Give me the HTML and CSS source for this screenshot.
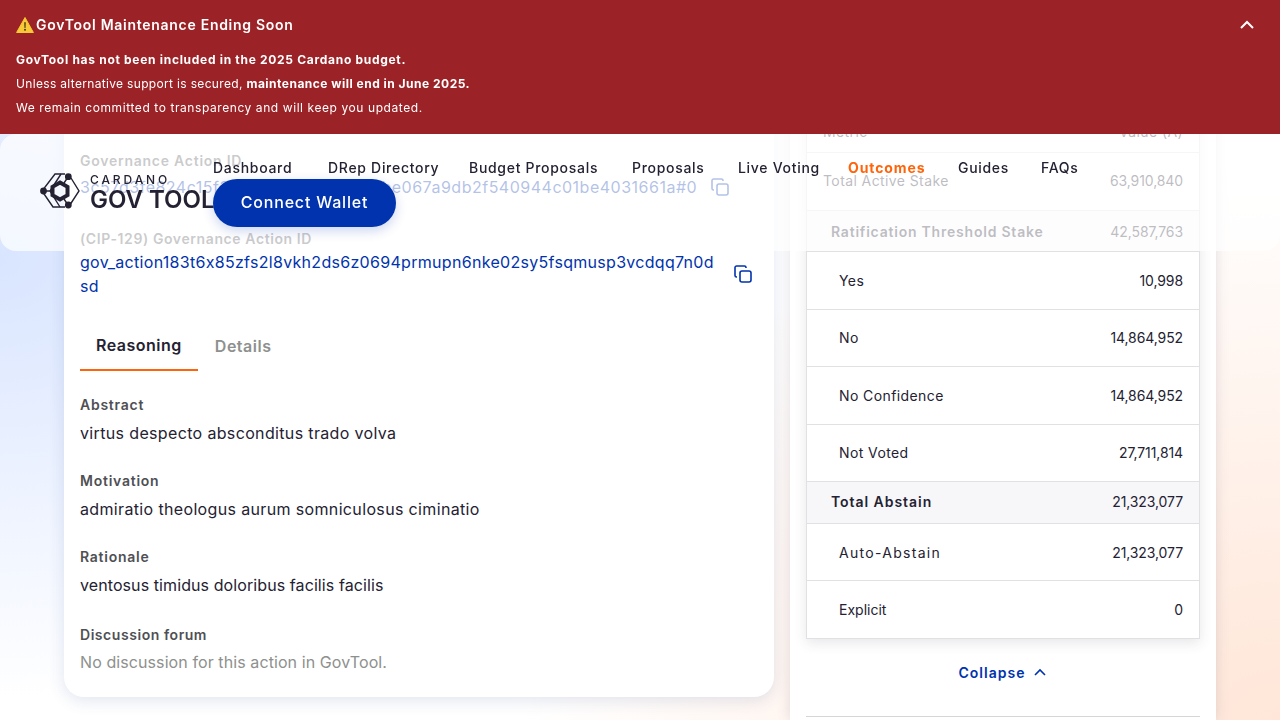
FILE: index.html
```html
<!DOCTYPE html>
<html lang="en">
<head>
    <meta charset="UTF-8">
    <title>GovTool - Outcomes</title>
    <link rel="stylesheet" href="styles.css">
</head>
<body>
    <!-- Maintenance banner -->
    <div class="banner">
        <div class="banner-head">
            <h1 class="banner-title">
                <svg class="warn-icon" viewBox="0 0 18 18" width="18" height="18"><path d="M9 1.5 17.4 16.5H.6Z" fill="#f7c936" stroke="#f7c936" stroke-width="1" stroke-linejoin="round"/><path d="M8.2 6.2h1.6L9.5 12h-1Z" fill="#4a3a10"/><circle cx="9" cy="13.8" r="1" fill="#4a3a10"/></svg>
                GovTool Maintenance Ending Soon
            </h1>
            <svg class="chevron-light" viewBox="0 0 16 10" width="16" height="10"><path d="M2 8l6-6 6 6" fill="none" stroke="#fff" stroke-width="2"/></svg>
        </div>
        <p class="banner-line"><b class="bold-wide">GovTool has not been included in the 2025 Cardano budget.</b></p>
        <p class="banner-line line-tight">Unless alternative support is secured, <b>maintenance will end in June 2025.</b></p>
        <p class="banner-line">We remain committed to transparency and will keep you updated.</p>
    </div>

    <!-- Top navigation -->
    <header class="topbar">
        <div class="logo">
            <svg class="logo-mark" viewBox="0 0 40 36" width="40" height="36">
                <path d="M25 1H15L2 18 13 34H25M31 5 39 18 30.5 31" fill="none" stroke="#242232" stroke-width="1.4"/>
                <path d="M28 4 24 10M4 18H11M28 32 24 26M21 1 10 18 20 34" fill="none" stroke="#242232" stroke-width="1.4"/>
                <path d="M20 9.5 27.5 13.8V22.2L20 26.5 12.5 22.2V13.8Z" fill="none" stroke="#242232" stroke-width="4"/>
                <circle cx="28.3" cy="3.7" r="3.4" fill="#242232"/>
                <circle cx="3.5" cy="18" r="3.4" fill="#242232"/>
                <circle cx="28.3" cy="32" r="3.4" fill="#242232"/>
            </svg>
            <div class="logo-text">
                <span class="logo-small">CARDANO</span>
                <span class="logo-big">GOV TOOL</span>
            </div>
        </div>
        <div class="topbar-right">
            <nav class="nav">
                <a class="nav-link">Dashboard</a>
                <a class="nav-link">DRep Directory</a>
                <a class="nav-link">Budget Proposals</a>
                <a class="nav-link">Proposals</a>
                <a class="nav-link">Live Voting</a>
                <a class="nav-link nav-active">Outcomes</a>
                <a class="nav-link">Guides</a>
                <a class="nav-link">FAQs</a>
            </nav>
            <button class="connect-btn">Connect Wallet</button>
        </div>
    </header>

    <main class="page">
        <!-- Action details -->
        <section class="card details-card">
            <h3 class="field-label">Governance Action ID</h3>
            <div class="id-row id-row-first">
                <span class="id-text">3c57d3fe824c15f3a91d07c2e6b4d8f1be067a9db2f540944c01be4031661a#0</span>
                <svg class="copy-icon" viewBox="0 0 18 18" width="18" height="18"><rect x="6" y="6" width="11" height="11" rx="2"/><path d="M3 12H2.6A1.6 1.6 0 0 1 1 10.4V2.6A1.6 1.6 0 0 1 2.6 1H10.4A1.6 1.6 0 0 1 12 2.6V3"/></svg>
            </div>
            <h3 class="field-label label-cip">(CIP-129) Governance Action ID</h3>
            <div class="id-row">
                <span class="id-text id-wrap">gov_action183t6x85zfs2l8vkh2ds6z0694prmupn6nke02sy5fsqmusp3vcdqq7n0dsd</span>
                <svg class="copy-icon" viewBox="0 0 18 18" width="18" height="18"><rect x="6" y="6" width="11" height="11" rx="2"/><path d="M3 12H2.6A1.6 1.6 0 0 1 1 10.4V2.6A1.6 1.6 0 0 1 2.6 1H10.4A1.6 1.6 0 0 1 12 2.6V3"/></svg>
            </div>

            <div class="tabs">
                <a class="tab tab-active">Reasoning</a>
                <a class="tab">Details</a>
            </div>

            <div class="field">
                <h3 class="field-label">Abstract</h3>
                <p class="field-value">virtus despecto absconditus trado volva</p>
            </div>
            <div class="field">
                <h3 class="field-label">Motivation</h3>
                <p class="field-value">admiratio theologus aurum somniculosus ciminatio</p>
            </div>
            <div class="field">
                <h3 class="field-label">Rationale</h3>
                <p class="field-value value-tight">ventosus timidus doloribus facilis facilis</p>
            </div>
            <div class="field field-last">
                <h3 class="field-label">Discussion forum</h3>
                <p class="field-value value-tight muted">No discussion for this action in GovTool.</p>
            </div>
        </section>

        <!-- Vote results -->
        <section class="card results-card">
            <table class="results">
                <thead>
                    <tr class="row-head"><th>Metric</th><th class="num">Value (₳)</th></tr>
                </thead>
                <tbody>
                    <tr class="row-main"><td>Total Active Stake</td><td class="num">63,910,840</td></tr>
                    <tr class="row-total"><td>Ratification Threshold Stake</td><td class="num">42,587,763</td></tr>
                    <tr class="row-sub"><td>Yes</td><td class="num">10,998</td></tr>
                    <tr class="row-sub"><td>No</td><td class="num">14,864,952</td></tr>
                    <tr class="row-sub"><td>No Confidence</td><td class="num">14,864,952</td></tr>
                    <tr class="row-sub"><td>Not Voted</td><td class="num">27,711,814</td></tr>
                    <tr class="row-total row-abstain"><td>Total Abstain</td><td class="num">21,323,077</td></tr>
                    <tr class="row-sub"><td class="label-wide">Auto-Abstain</td><td class="num">21,323,077</td></tr>
                    <tr class="row-sub"><td class="label-tight">Explicit</td><td class="num">0</td></tr>
                </tbody>
            </table>
            <button class="collapse-btn">Collapse
                <svg viewBox="0 0 14 9" width="14" height="9"><path d="M2 7l5-5 5 5" fill="none" stroke="#0033ad" stroke-width="1.6"/></svg>
            </button>
            <hr class="divider">
        </section>
    </main>
</body>
</html>
```

FILE: styles.css
```css
* {
    box-sizing: border-box;
}
html, body {
    height: 720px;
    overflow: hidden;
}
body {
    margin: 0;
    font-family: Inter, "Noto Sans", sans-serif;
    color: #242232;
    background:
        radial-gradient(ellipse 560px 440px at 0 260px, #d9e5ff 0%, rgba(217, 229, 255, 0) 100%),
        radial-gradient(ellipse 760px 560px at 1280px 720px, #ffe6d8 0%, rgba(255, 230, 216, 0) 100%),
        #fff;
}
h1, h3, p {
    margin: 0;
}

/* banner */
.banner {
    position: fixed;
    top: 0;
    left: 0;
    right: 0;
    height: 134px;
    z-index: 3;
    padding: 15px 24px 0 16px;
    background-color: #9b2226;
    color: #fff;
}
.banner-head {
    display: flex;
    justify-content: space-between;
    align-items: center;
    height: 18px;
    margin-bottom: 15px;
}
.banner-title {
    display: flex;
    align-items: center;
    gap: 2px;
    font-size: 14px;
    font-weight: 600;
    letter-spacing: 0.72px;
}
.warn-icon {
    margin-top: 2px;
}
.chevron-light {
    margin: 2px 1px 0 0;
}
.banner-line {
    font-size: 12px;
    line-height: 24px;
    letter-spacing: 0.58px;
}
.banner-line b {
    font-weight: 700;
}
.bold-wide {
    letter-spacing: 0.7px;
}
.line-tight {
    letter-spacing: 0.33px;
}
.line-tight b {
    letter-spacing: 0.49px;
}

/* header */
.topbar {
    position: fixed;
    top: 134px;
    left: 0;
    right: 0;
    height: 117px;
    z-index: 2;
    display: flex;
    padding: 23px 40px 0;
    background-color: rgba(255, 255, 255, 0.7);
    border-radius: 16px;
}
.logo {
    display: flex;
    align-items: center;
    gap: 10px;
    width: 173px;
    height: 68px;
    flex: none;
}
.logo-mark {
    flex: none;
}
.logo-text {
    display: flex;
    flex-direction: column;
    gap: 2px;
    margin-top: 4px;
    line-height: 1;
}
.logo-small {
    font-size: 12px;
    font-weight: 500;
    letter-spacing: 2.9px;
    line-height: 12px;
}
.logo-big {
    font-size: 24px;
    font-weight: 600;
    line-height: 24px;
    white-space: nowrap;
}
.topbar-right {
    display: flex;
    flex-direction: column;
    align-items: flex-start;
}
.nav {
    display: grid;
    grid-template-columns: 83px 109px 131px 74px 78px 78px 51px 37px;
    column-gap: 32px;
    height: 20px;
    margin-bottom: 2px;
    align-items: center;
}
.nav-link {
    font-size: 14px;
    font-weight: 500;
    letter-spacing: 0.7px;
    white-space: nowrap;
}
.nav-active {
    color: #ff640a;
    font-weight: 700;
    letter-spacing: 0.9px;
}
.connect-btn {
    width: 183px;
    height: 48px;
    border: 0;
    border-radius: 24px;
    padding-bottom: 4px;
    background-color: #0033ad;
    color: #fff;
    font-family: inherit;
    font-size: 16px;
    font-weight: 500;
    letter-spacing: 0.8px;
    box-shadow: 0 4px 12px rgba(0, 51, 173, 0.2);
}

/* layout */
.page {
    display: flex;
    gap: 16px;
    height: 720px;
    padding: 100px 64px 0;
}
.card {
    background-color: #fff;
}
.details-card {
    width: 710px;
    height: 597px;
    padding: 51px 16px 0;
    border-radius: 20px;
    box-shadow: 0 4px 16px rgba(51, 80, 150, 0.14);
}
.results-card {
    width: 426px;
    padding: 0 16px;
    box-shadow: 0 0 12px rgba(100, 90, 120, 0.2);
}

/* details */
.field-label {
    font-size: 14px;
    line-height: 20px;
    font-weight: 600;
    color: #4f5054;
    letter-spacing: 0.75px;
}
.label-cip {
    margin-top: 30px;
    letter-spacing: 0.6px;
}
.id-row {
    display: flex;
    align-items: center;
    gap: 14px;
    margin-top: 1px;
}
.id-row-first {
    margin-top: 4px;
}
.id-text {
    font-size: 16px;
    line-height: 24px;
    color: #0033ad;
    letter-spacing: 0.5px;
    white-space: nowrap;
}
.id-wrap {
    width: 640px;
    letter-spacing: 0.3px;
    white-space: normal;
    word-break: break-all;
}
.copy-icon {
    flex: none;
    fill: none;
    stroke: #0033ad;
    stroke-width: 1.6;
}
.tabs {
    display: flex;
    gap: 1px;
    margin-top: 25px;
    margin-bottom: 24px;
}
.tab {
    height: 48px;
    padding: 0 16px 2px;
    display: flex;
    align-items: center;
    font-size: 16px;
    font-weight: 600;
    letter-spacing: 0.5px;
    color: #8e908e;
}
.tab-active {
    color: #242232;
    border-bottom: 2px solid #ff640a;
}
.field {
    margin-bottom: 26px;
}
.field-last {
    margin-top: 28px;
}
.field-last .field-label {
    letter-spacing: 0.55px;
}
.field-value {
    margin-top: 6px;
    font-size: 16px;
    line-height: 24px;
    letter-spacing: 0.35px;
}
.value-tight {
    letter-spacing: 0.09px;
}
.field-last .field-value {
    margin-top: 5px;
}
.muted {
    color: #8e908e;
}

/* results table */
.results {
    width: 100%;
    border-collapse: collapse;
    font-size: 14px;
    letter-spacing: 0.4px;
    box-shadow: 0 4px 12px rgba(60, 60, 80, 0.12);
}
.results th, .results td {
    padding: 0 16px;
    border: 1px solid #e1e1e4;
    text-align: left;
    font-weight: 400;
}
.results td:first-child, .results th:first-child {
    border-right: 0;
}
.results td:last-child, .results th:last-child {
    border-left: 0;
}
.results .num {
    text-align: right;
}
.results td.num {
    letter-spacing: -0.1px;
}
.results th {
    padding-top: 10px;
}
.row-head {
    height: 52px;
}
.row-main {
    height: 58px;
}
.results .row-main td {
    padding-bottom: 2px;
}
.row-sub {
    height: 57.5px;
}
.row-sub td:first-child {
    padding-left: 32px;
}
.results .label-wide {
    letter-spacing: 1.3px;
}
.results .label-tight {
    letter-spacing: 0px;
}
.row-total {
    height: 41px;
    background-color: #f7f7fa;
}
.row-total td:first-child {
    padding-left: 24px;
    font-weight: 600;
    letter-spacing: 0.78px;
}
.row-abstain {
    height: 42px;
}
.results .row-abstain td {
    padding-bottom: 2px;
}
.results .row-abstain td:first-child {
    letter-spacing: 0.95px;
}
.row-abstain + .row-sub {
    height: 57px;
}
.collapse-btn {
    display: flex;
    align-items: center;
    justify-content: center;
    gap: 8px;
    width: 100%;
    height: 68px;
    border: 0;
    background: none;
    font-family: inherit;
    font-size: 14px;
    font-weight: 600;
    letter-spacing: 1px;
    color: #0033ad;
}
.divider {
    margin: 9px 0 0;
    border: 0;
    border-top: 1px solid #d6d6d8;
}
```
